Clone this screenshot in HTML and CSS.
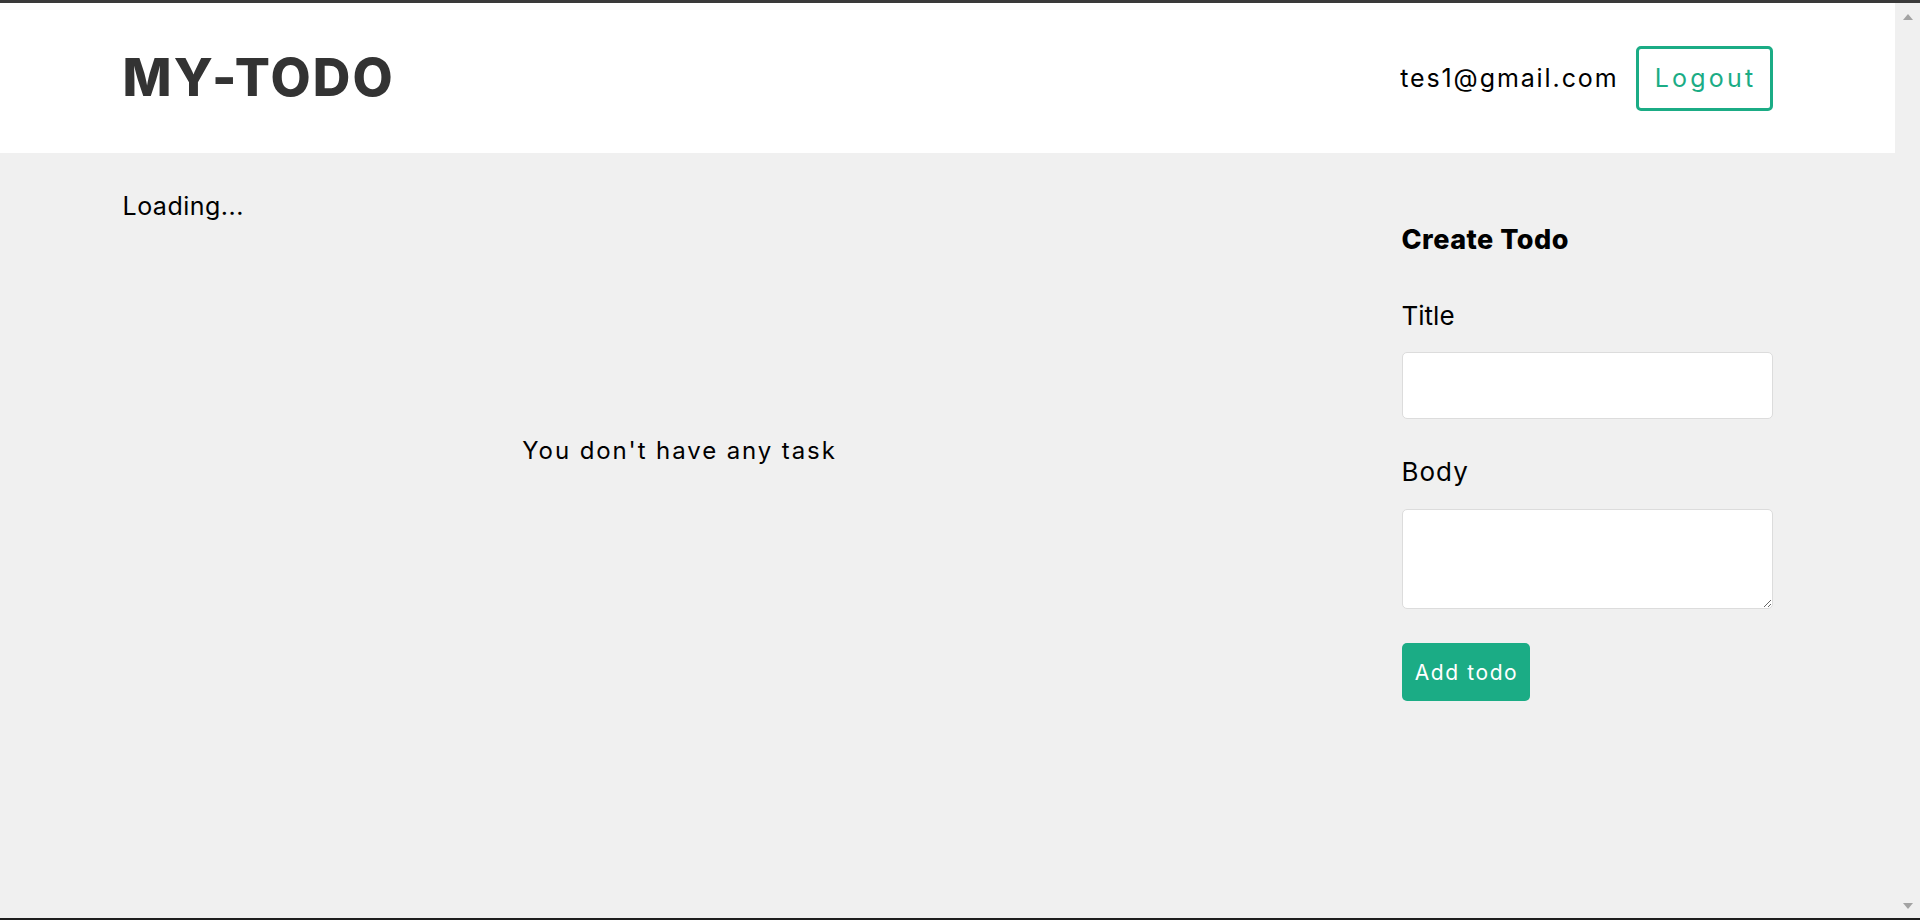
FILE: index.html
```html
<!DOCTYPE html>
<html lang="en">
<head>
<meta charset="utf-8">
<title>MY-TODO</title>
<link rel="stylesheet" href="styles.css">
</head>
<body>
<div class="chrome-top"></div>
<div class="viewport">
  <div class="page">
    <header class="header">
      <div class="container header-inner">
        <h1 class="logo">MY-TODO</h1>
        <div class="user">
          <span class="email">tes1@gmail.com</span>
          <button class="btn-outline" type="button">Logout</button>
        </div>
      </div>
    </header>
    <main class="container content">
      <section class="todos">
        <p class="loading">Loading...</p>
        <div class="empty"><p>You don't have any task</p></div>
      </section>
      <aside class="create">
        <h2 class="create-title">Create Todo</h2>
        <form class="create-form">
          <label class="field-label" for="title">Title</label>
          <input class="field-input" id="title" type="text">
          <label class="field-label body-label" for="body">Body</label>
          <textarea class="field-textarea" id="body"></textarea>
          <button class="btn-primary" type="button">Add todo</button>
        </form>
      </aside>
    </main>
  </div>
  <div class="scrollbar">
    <span class="arrow arrow-up"></span>
    <span class="arrow arrow-down"></span>
  </div>
</div>
<div class="chrome-bottom"></div>
</body>
</html>
```

FILE: styles.css
```css
* { box-sizing: border-box; }
html, body { margin: 0; height: 100%; overflow: hidden; }
body {
  font-family: "Inter", "Liberation Sans", sans-serif;
  background: #f0f0f0;
  color: #000;
  display: flex;
  flex-direction: column;
}
.chrome-top { height: 3px; background: #3a3a3a; flex: none; }
.chrome-bottom { height: 2px; background: #1e1e1e; flex: none; }
.viewport { flex: 1; display: flex; min-height: 0; }
.page { flex: 1; min-width: 0; }
.scrollbar {
  width: 25px; flex: none; background: #f0f0f0;
  display: flex; flex-direction: column; justify-content: space-between; align-items: center;
  padding: 11px 0 9px;
}
.arrow { width: 0; height: 0; border-left: 5.5px solid transparent; border-right: 5.5px solid transparent; }
.arrow-up { border-bottom: 6px solid #a3a3a3; }
.arrow-down { border-top: 6px solid #a3a3a3; }

.container { width: 1650px; margin: 0 auto; }
.header { background: #fff; height: 150px; }
.header-inner { height: 100%; display: flex; align-items: center; justify-content: space-between; }
.logo { margin: 0; font-size: 52px; font-weight: 800; color: #333; line-height: 1.2; letter-spacing: 2.2px; }
.user { display: flex; align-items: center; gap: 17px; }
.email { font-size: 25px; line-height: 1.2; letter-spacing: 1.9px; }
.btn-outline {
  font-family: inherit; font-size: 25px; letter-spacing: 3.2px; color: #1bac85; background: #fff;
  border: 3px solid #1bac85; border-radius: 5px; width: 137px; height: 65px; padding: 0 0 0 3px; cursor: pointer;
}

.content { display: grid; grid-template-columns: 1114px 371px; justify-content: space-between; padding-top: 38px; }
.loading { margin: 0; font-size: 25px; line-height: 30px; letter-spacing: 0.5px; }
.empty { padding-top: 216px; text-align: center; }
.empty p { margin: 0; font-size: 24px; line-height: 28px; letter-spacing: 1.9px; }

.create { padding-top: 33px; }
.create-title { margin: 0 0 44px; font-size: 27px; font-weight: 800; line-height: 32px; letter-spacing: 0.5px; }
.create-form { display: flex; flex-direction: column; align-items: flex-start; }
.field-label { display: block; font-size: 26px; line-height: 31px; margin-bottom: 21px; }
.field-input, .field-textarea {
  width: 100%; border: 1px solid #dcdcdc; border-radius: 5px; background: #fff; font-family: inherit; font-size: 20px; padding: 10px;
}
.field-input { height: 67px; margin-bottom: 37px; }
.body-label { margin-bottom: 22px; letter-spacing: 1px; }
.field-textarea { height: 100px; margin-bottom: 34px; }
.btn-primary {
  font-family: inherit; font-size: 21px; letter-spacing: 1.6px; color: #fff; background: #1bac85; border: none; border-radius: 5px;
  width: 128px; height: 58px; padding: 0 0 0 2px; cursor: pointer;
}
```
